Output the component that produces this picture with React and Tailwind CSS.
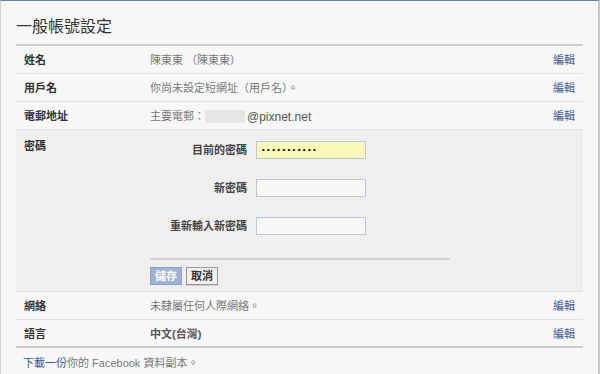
import React from 'react';

const font = { fontFamily: '"Liberation Sans", "Noto Sans CJK TC", sans-serif' };

const Row = ({ label, children, last }) => (
  <div className={`flex items-center h-[28px] pl-2 pr-2 pt-[2px] ${last ? 'border-b-2 border-[#c9c9c9]' : 'border-b border-[#e3e3e3]'}`}>
    <div className="w-[126px] font-bold text-[11px] text-[#333]">{label}</div>
    <div className="flex-1 text-[11px] text-[#777] flex items-center">{children}</div>
    <a className="text-[11px] text-[#3b5998]">編輯</a>
  </div>
);

const Field = ({ label, filled }) => (
  <div className="flex items-center h-[18px]">
    <div className="w-[97px] text-right font-bold text-[11px] text-[#444]">{label}</div>
    <div
      className={`ml-[9px] w-[110px] h-[18px] border border-[#bdc7d8] flex items-center pl-[5px] text-[8px] tracking-[2.3px] text-black ${filled ? 'bg-[#faf8b7]' : 'bg-[#f7f7f7]'}`}
    >
      {filled ? '•••••••••••' : ''}
    </div>
  </div>
);

export default function App() {
  return (
    <div className="w-[600px] h-[374px] bg-[#f7f7f7] border-t border-t-[#6c7ea4] border-l border-l-[#d0d0d0] border-r-2 border-r-[#c8c8c8] overflow-hidden" style={font}>
      <div className="mx-[15px]">
        <div className="h-[45px] flex items-center border-b-2 border-[#cccccc]">
          <h1 className="text-[16px] text-[#333] pt-[8px]">一般帳號設定</h1>
        </div>
        <Row label="姓名">
          <span>陳東東 （陳東東）</span>
        </Row>
        <Row label="用戶名">
          <span>你尚未設定短網址（用戶名）。</span>
        </Row>
        <Row label="電郵地址">
          <span>主要電郵：</span>
          <span className="inline-block w-[40px] h-[13px] bg-[#e6e6e6]"></span>
          <span className="ml-[2px] text-[12px] text-[#555]">@pixnet.net</span>
        </Row>
        <div className="bg-[#efefef] border-b border-[#e3e3e3] h-[162px] pl-2 flex">
          <div className="w-[126px] font-bold text-[11px] text-[#333] pt-[8px]">密碼</div>
          <div className="flex flex-col pt-[11px]">
            <div className="flex flex-col gap-[20px]">
              <Field label="目前的密碼" filled />
              <Field label="新密碼" />
              <Field label="重新輸入新密碼" />
            </div>
            <div className="w-[300px] h-[2px] bg-[#d3d3d3] mt-[23px]"></div>
            <div className="flex gap-[4px] mt-[7px]">
              <button className="h-[18px] px-[4px] bg-[#9fb2d6] border border-[#8da2c8] text-white text-[11px] font-bold leading-none">儲存</button>
              <button className="h-[18px] px-[4px] bg-[#f0f0f0] border border-[#999] text-[#333] text-[11px] font-bold leading-none shadow-[0_1px_0_#ccc]">取消</button>
            </div>
          </div>
        </div>
        <Row label="網絡">
          <span>未隸屬任何人際網絡。</span>
        </Row>
        <Row label="語言" last>
          <span className="font-bold text-[#555]">中文(台灣)</span>
        </Row>
        <div className="pt-[7px] text-[11px] text-[#777] pl-[7px]">
          <a className="text-[#3b5998]">下載一份</a>你的 Facebook 資料副本。
        </div>
      </div>
    </div>
  );
}
